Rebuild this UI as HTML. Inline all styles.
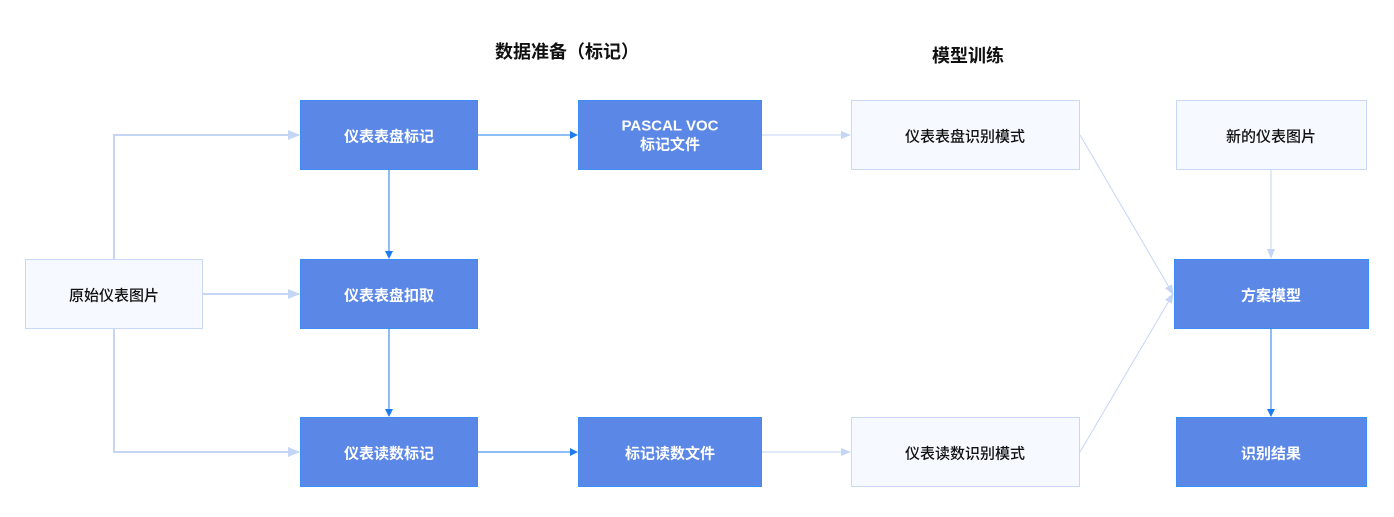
<!DOCTYPE html>
<html><head><meta charset="utf-8"><style>
body{margin:0;background:#fff;}
svg text{font-family:"Liberation Sans","Noto Sans CJK SC",sans-serif;font-size:15px;text-anchor:middle;dominant-baseline:central;}
.w{fill:#fff;font-weight:bold}
.d{fill:#111;font-weight:500}
</style></head><body>
<svg width="1394" height="512" viewBox="0 0 1394 512" xmlns="http://www.w3.org/2000/svg">
<defs>
<marker id="la" markerWidth="12" markerHeight="10" refX="11" refY="5" orient="auto" markerUnits="userSpaceOnUse"><path d="M0,0 L12,5 L0,10 Z" fill="#c5d5f5"/></marker>
<marker id="ba" markerWidth="8" markerHeight="10" refX="7" refY="5" orient="auto" markerUnits="userSpaceOnUse"><path d="M0,1 L8,5 L0,9 Z" fill="#1e7cf0"/></marker>
<marker id="sa" markerWidth="10" markerHeight="8" refX="9" refY="4" orient="auto" markerUnits="userSpaceOnUse"><path d="M0,0 L10,4 L0,8 Z" fill="#c5d5f5"/></marker>
</defs>
<text x="567" y="52" style="font-size:18px;font-weight:bold;fill:#111">数据准备（标记）</text>
<text x="968" y="56" style="font-size:18px;font-weight:bold;fill:#111">模型训练</text>
<g fill="none" stroke="#c5d5f5" stroke-width="2">
<path d="M114,259 V135 H299" marker-end="url(#la)"/>
<path d="M203,294 H299" marker-end="url(#la)"/>
<path d="M114,329 V452 H299" marker-end="url(#la)"/>
</g>
<g fill="none" stroke="#c5d5f5" stroke-width="1">
<path d="M762,135 H850" marker-end="url(#sa)"/>
<path d="M762,452 H850" marker-end="url(#sa)"/>
<path d="M1080,135 L1173,294" marker-end="url(#sa)"/>
<path d="M1080,452 L1173,294" marker-end="url(#sa)"/>
<path d="M1271,170 V258" marker-end="url(#sa)"/>
</g>
<g fill="none" stroke="#1e7cf0" stroke-width="1">
<path d="M478,135 H577" marker-end="url(#ba)"/>
<path d="M478,452 H577" marker-end="url(#ba)"/>
<path d="M389,170 V258" marker-end="url(#ba)"/>
<path d="M389,329 V416" marker-end="url(#ba)"/>
<path d="M1271,329 V416" marker-end="url(#ba)"/>
</g>
<g fill="#f6f9ff" stroke="#c9d8f6" stroke-width="1">
<rect x="25.5" y="259.5" width="177" height="69"/>
<rect x="851.5" y="100.5" width="228" height="69"/>
<rect x="851.5" y="417.5" width="228" height="69"/>
<rect x="1176.5" y="100.5" width="190" height="69"/>
</g>
<g fill="#5b87e6" stroke="#3a8ef5" stroke-width="1">
<rect x="300.5" y="100.5" width="177" height="69"/>
<rect x="300.5" y="259.5" width="177" height="69"/>
<rect x="300.5" y="417.5" width="177" height="69"/>
<rect x="578.5" y="100.5" width="183" height="69"/>
<rect x="578.5" y="417.5" width="183" height="69"/>
<rect x="1174.5" y="259.5" width="194" height="69"/>
<rect x="1176.5" y="417.5" width="190" height="69"/>
</g>
<text x="114" y="296" class="d">原始仪表图片</text>
<text x="389" y="137" class="w">仪表表盘标记</text>
<text x="389" y="296" class="w">仪表表盘扣取</text>
<text x="389" y="454" class="w">仪表读数标记</text>
<text x="670" y="126" class="w">PASCAL VOC</text>
<text x="670" y="145" class="w">标记文件</text>
<text x="670" y="454" class="w">标记读数文件</text>
<text x="965" y="137" class="d">仪表表盘识别模式</text>
<text x="965" y="454" class="d">仪表读数识别模式</text>
<text x="1271" y="137" class="d">新的仪表图片</text>
<text x="1271" y="296" class="w">方案模型</text>
<text x="1271" y="454" class="w">识别结果</text>
</svg>
</body></html>
